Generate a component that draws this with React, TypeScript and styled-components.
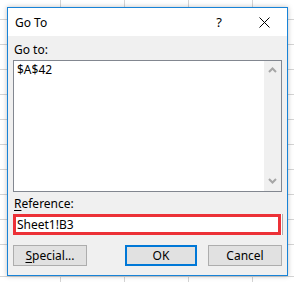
import React from 'react';
import styled, { createGlobalStyle } from 'styled-components';

const GlobalStyle = createGlobalStyle`
    html, body {
        margin: 0;
        padding: 0;
    }
    body {
        width: 294px;
        height: 282px;
        overflow: hidden;
        font-family: "Noto Sans", "Liberation Sans", sans-serif;
        font-size: 12px;
        color: #000;
        background-color: #fff;
        background-image:
            repeating-linear-gradient(to right, transparent 0 60px, #d4d4d4 60px 61px, transparent 61px 64px),
            repeating-linear-gradient(to bottom, transparent 0 19px, #d4d4d4 19px 20px, transparent 20px 25px);
        background-position: 0 0, 0 -25px;
    }
`;

const Page = styled.div`
    padding: 7px 6px 0 7px;
`;

const Dialog = styled.div`
    width: 279px;
    height: 267px;
    border: 1px solid #1883d7;
    background: #f0f0f0;
    box-shadow: 0 0 5px rgba(0, 0, 0, 0.25);
    display: flex;
    flex-direction: column;
`;

const TitleBar = styled.div`
    height: 30px;
    background: #fff;
    display: flex;
    align-items: center;
    padding-left: 7px;
`;

const Title = styled.span`
    flex: 1;
    font-size: 12px;
`;

const HelpBtn = styled.span`
    width: 10px;
    margin-right: 35px;
    font-size: 13px;
    text-align: center;
`;

const CloseBtn = styled.svg`
    width: 11px;
    height: 11px;
    margin-right: 17px;
`;

const Body = styled.div`
    flex: 1;
    padding: 6px 5px 9px 5px;
    display: flex;
    flex-direction: column;
`;

const Label = styled.div<{ $gap: number }>`
    line-height: 16px;
    height: 16px;
    padding-left: 1px;
    margin-top: ${({ $gap }) => $gap}px;
    margin-bottom: 2px;
`;

const Underlined = styled.span`
    text-decoration: underline;
    text-underline-offset: 2px;
`;

const ListBox = styled.div`
    height: 130px;
    border: 1px solid #828790;
    background: #fff;
    display: flex;
`;

const ListItems = styled.div`
    flex: 1;
    padding: 1px 3px;
    line-height: 16px;
`;

const ScrollBar = styled.div`
    width: 17px;
    background: #f0f0f0;
    display: flex;
    flex-direction: column;
    justify-content: space-between;
    align-items: center;
    padding: 6px 0 7px;
`;

const Chevron = styled.svg`
    width: 9px;
    height: 6px;
`;

const RefInput = styled.div`
    height: 15px;
    width: 261px;
    border: 3px solid #ec3137;
    background: #fff;
    line-height: 15px;
    padding-left: 1px;
    box-shadow: 1px 0 0 #fff, 2px 0 0 #adadad;
`;

const ButtonRow = styled.div`
    margin-top: 10px;
    display: flex;
    gap: 11px;
`;

const Button = styled.div<{ $primary?: boolean; $push?: boolean }>`
    width: ${({ $primary }) => ($primary ? 68 : 72)}px;
    height: ${({ $primary }) => ($primary ? 17 : 19)}px;
    border: ${({ $primary }) => ($primary ? '2px solid #0078d7' : '1px solid #adadad')};
    background: #e1e1e1;
    display: flex;
    align-items: center;
    justify-content: center;
    margin-left: ${({ $push }) => ($push ? 'auto' : '0')};
`;

const App = () => (
    <>
        <GlobalStyle />
        <Page>
            <Dialog>
                <TitleBar>
                    <Title>Go To</Title>
                    <HelpBtn>?</HelpBtn>
                    <CloseBtn viewBox="0 0 11 11">
                        <path d="M0.5 0.5 L10.5 10.5 M10.5 0.5 L0.5 10.5" stroke="#000" strokeWidth="1" />
                    </CloseBtn>
                </TitleBar>
                <Body>
                    <Label $gap={0}>Go to:</Label>
                    <ListBox>
                        <ListItems>$A$42</ListItems>
                        <ScrollBar>
                            <Chevron viewBox="0 0 9 6">
                                <path d="M1 5 L4.5 1.5 L8 5" stroke="#a6a6a6" strokeWidth="2" fill="none" />
                            </Chevron>
                            <Chevron viewBox="0 0 9 6">
                                <path d="M1 1 L4.5 4.5 L8 1" stroke="#a6a6a6" strokeWidth="2" fill="none" />
                            </Chevron>
                        </ScrollBar>
                    </ListBox>
                    <Label $gap={4}><Underlined>R</Underlined>eference:</Label>
                    <RefInput>Sheet1!B3</RefInput>
                    <ButtonRow>
                        <Button><Underlined>S</Underlined>pecial...</Button>
                        <Button $primary $push>OK</Button>
                        <Button>Cancel</Button>
                    </ButtonRow>
                </Body>
            </Dialog>
        </Page>
    </>
);

export default App;
